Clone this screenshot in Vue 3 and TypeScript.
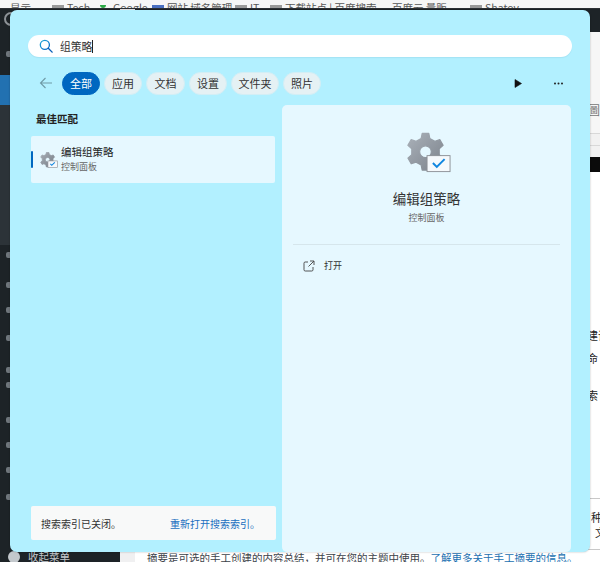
<script setup lang="ts">
import { computed } from 'vue'

const chips = [
  { label: '全部', w: 38, active: true },
  { label: '应用', w: 38 },
  { label: '文档', w: 39 },
  { label: '设置', w: 38 },
  { label: '文件夹', w: 48 },
  { label: '照片', w: 38 },
]

const marks = [
  { t: '显示', w: 42 },
  { t: 'Tech', w: 48, box: true },
  { t: 'Google', w: 52, dot: true },
  { t: '网站 域名管理', w: 83, box: true, blue: true },
  { t: 'IT', w: 35, box: true },
  { t: '下载站点 | 百度搜索...', w: 122, box: true },
  { t: '百度云 量贩', w: 78 },
  { t: 'Shatov', w: 60, box: true },
]

const sideDots = [0, 24, 19, 22, 26, 9, 29, 19, 19, 21]

const gear = computed(() => {
  const cx = 50, cy = 50, outer = 48, inner = 36, teeth = 6
  const pts: string[] = []
  for (let i = 0; i < teeth; i++) {
    const a = (i * 2 * Math.PI) / teeth - Math.PI / 2
    const step = (2 * Math.PI) / teeth
    const p: [number, number][] = [
      [inner, a - step * 0.3],
      [outer, a - step * 0.17],
      [outer, a + step * 0.17],
      [inner, a + step * 0.3],
    ]
    for (const [r, t] of p) {
      pts.push(`${(cx + r * Math.cos(t)).toFixed(1)} ${(cy + r * Math.sin(t)).toFixed(1)}`)
    }
  }
  const hole = `M${cx + 15} ${cy}a15 15 0 1 0 -30 0a15 15 0 1 0 30 0z`
  return `M${pts.join('L')}Z${hole}`
})
</script>

<template>
  <div class="page">
    <div class="bookmarks">
      <span v-for="m in marks" :key="m.t" class="mark" :style="{ width: m.w + 'px' }">
        <i v-if="m.box" class="mark-box" :class="{ blue: m.blue }"></i>
        <i v-if="m.dot" class="mark-dot"></i>
        <b class="mark-t">{{ m.t }}</b>
      </span>
    </div>
    <div class="desk">
      <aside class="side">
        <div class="side-top"><i class="wp"></i><i class="side-dot home"></i></div>
        <div class="side-active"></div>
        <div class="side-sub"></div>
        <div class="side-rest">
          <i v-for="(d, i) in sideDots" :key="i" class="side-dot" :style="{ marginTop: d + 'px' }"></i>
        </div>
        <div class="side-foot"><i class="collapse"></i>收起菜单</div>
      </aside>
      <main class="content">
        <div class="adminbar"></div>
        <div class="greys">
          <span class="gl-icon">圖</span>
        </div>
        <div class="gline"></div>
        <div class="gline"></div>
        <div class="blackbar"></div>
        <div class="frag f1">建议</div>
        <div class="frag f2">命</div>
        <div class="frag f3">索</div>
        <div class="frag f4">种</div>
        <div class="frag f5">文</div>
        <div class="bline l1"></div>
        <div class="bline l2"></div>
        <p class="excerpt">摘要是可选的手工创建的内容总结，并可在您的主题中使用。<a>了解更多关于手工摘要的信息。</a></p>
      </main>
    </div>

    <section class="panel">
      <div class="search">
        <svg class="search-ico" viewBox="0 0 16 16" width="14" height="14">
          <defs>
            <linearGradient id="sg" x1="0" y1="0" x2="1" y2="1">
              <stop offset="0" stop-color="#1fa8d8" />
              <stop offset="1" stop-color="#0a62c4" />
            </linearGradient>
          </defs>
          <circle cx="6.7" cy="6.7" r="5.2" fill="none" stroke="url(#sg)" stroke-width="1.5" />
          <path d="M10.6 10.6 15 15" stroke="#0a5fb8" stroke-width="1.6" stroke-linecap="round" />
        </svg>
        <span class="query">组策略</span><span class="caret"></span>
      </div>

      <nav class="tabs">
        <svg class="back" viewBox="0 0 14 12" width="14" height="12">
          <path d="M13 6H1.5M6.5 1 1.5 6l5 5" fill="none" stroke="#6f9aa6" stroke-width="1.1" />
        </svg>
        <span
          v-for="c in chips"
          :key="c.label"
          class="chip"
          :class="{ active: c.active }"
          :style="{ width: c.w + 'px' }"
        >{{ c.label }}</span>
        <span class="spacer"></span>
        <svg class="play" viewBox="0 0 8 9" width="8" height="9"><path d="M1 0.5 7.5 4.5 1 8.5Z" fill="#111" stroke="#111" stroke-width=".6" stroke-linejoin="round" /></svg>
        <svg class="more" viewBox="0 0 9 3" width="9" height="3">
          <circle cx="1" cy="1.5" r="1" fill="#222" /><circle cx="4.500" cy="1.5" r="1" fill="#222" /><circle cx="8" cy="1.5" r="1" fill="#222" />
        </svg>
      </nav>

      <div class="body">
        <div class="left">
          <h3 class="best">最佳匹配</h3>
          <div class="result">
            <i class="accent"></i>
            <svg class="res-ico" viewBox="0 0 118 104" width="18" height="16">
              <defs>
                <linearGradient id="g1" x1="0" y1="0" x2="1" y2="1">
                  <stop offset="0" stop-color="#a6adb5" />
                  <stop offset="1" stop-color="#777e87" />
                </linearGradient>
              </defs>
              <path :d="gear" fill="url(#g1)" fill-rule="evenodd" stroke="url(#g1)" stroke-width="5" stroke-linejoin="round" />
              <rect x="52" y="58" width="62" height="42" fill="#f5f8fb" stroke="#8a8e94" stroke-width="4" />
              <path d="M68 78l9 9 20-20" fill="none" stroke="#0f86e0" stroke-width="7" />
            </svg>
            <div class="res-text">
              <div class="res-title">编辑组策略</div>
              <div class="res-sub">控制面板</div>
            </div>
          </div>
          <div class="notice">
            <span>搜索索引已关闭。</span>
            <a>重新打开搜索索引。</a>
          </div>
        </div>

        <div class="detail">
          <svg class="big-ico" viewBox="0 0 118 104" width="46" height="41">
            <defs>
              <linearGradient id="g2" x1="0" y1="0" x2="1" y2="1">
                <stop offset="0" stop-color="#aab1b9" />
                <stop offset="1" stop-color="#7b828b" />
              </linearGradient>
            </defs>
            <path :d="gear" fill="url(#g2)" fill-rule="evenodd" stroke="url(#g2)" stroke-width="3" stroke-linejoin="round" />
            <rect x="54" y="60" width="59" height="41" fill="#f5f9fc" stroke="#8c9096" stroke-width="2.4" />
            <path d="M69 79l10 10 20-20" fill="none" stroke="#0f86e0" stroke-width="5" />
          </svg>
          <div class="d-title">编辑组策略</div>
          <div class="d-sub">控制面板</div>
          <div class="rule"></div>
          <div class="open">
            <svg viewBox="0 0 12 12" width="12" height="12">
              <path d="M5 2H2.2A1.2 1.2 0 0 0 1 3.2v6.6A1.2 1.2 0 0 0 2.2 11h6.6A1.2 1.2 0 0 0 10 9.800V7M7 1h4v4M11 1 5.500 6.500" fill="none" stroke="#444" stroke-width=".9" />
            </svg>
            <span>打开</span>
          </div>
        </div>
      </div>
    </section>
  </div>
</template>

<style>
html, body { margin: 0; padding: 0; background: #fff; }
</style>

<style scoped>
.page {
  position: relative;
  width: 600px;
  height: 562px;
  overflow: hidden;
  display: flex;
  flex-direction: column;
  background: #fff;
  font-family: "Noto Sans CJK SC", "Noto Sans", sans-serif;
}
.bookmarks {
  height: 8px;
  flex: none;
  display: flex;
  align-items: flex-end;
  padding-left: 10px;
  overflow: hidden;
  background: #f6f6f6;
  border-bottom: 1px solid #2c3034;
  box-sizing: content-box;
  font-size: 10.500px;
  line-height: 12px;
  color: #555;
}
.mark {
  flex: none;
  display: flex;
  align-items: flex-end;
  gap: 3px;
  white-space: nowrap;
  overflow: hidden;
  height: 8px;
}
.mark-t { font-weight: 400; flex: none; transform: translateY(6px); }
.mark-box { width: 12px; height: 3px; background: #9a9a9a; flex: none; }
.mark-box.blue { background: #4a6fc0; }
.mark-dot { width: 6px; height: 3px; border-radius: 0 0 3px 3px; background: #2aa845; flex: none; margin-right: 4px; }
.desk { flex: 1; display: flex; min-height: 0; }
.side { width: 120px; flex: none; background: #1d2327; display: flex; flex-direction: column; }
.side-top { height: 66px; flex: none; display: flex; flex-direction: column; }
.wp { width: 14px; height: 14px; margin: 3px 0 0 4px; box-sizing: border-box; border: 2px solid #8d9297; border-radius: 50%; }
.side-dot { display: block; width: 6px; height: 6px; margin-left: 6px; border-radius: 2px; background: #6f767c; flex: none; }
.home { margin-top: 25px; }
.side-active { height: 30px; flex: none; background: #2271b1; }
.side-sub { height: 140px; flex: none; background: #2c3338; }
.side-rest { flex: 1; padding-top: 7px; display: flex; flex-direction: column; }
.side-foot {
  height: 18px;
  flex: none;
  display: flex;
  align-items: center;
  gap: 8px;
  padding: 7px 0 0 8px;
  box-sizing: border-box;
  font-size: 10.500px;
  color: #c3c8cc;
}
.collapse { width: 12px; height: 12px; border-radius: 50%; background: #c3c8cc; }
.content {
  flex: 1;
  position: relative;
  background: #fff;
  border-left: 15px solid #f0f0f1;
  box-sizing: border-box;
}
.adminbar { height: 23px; background: #1d2327; }
.greys {
  height: 101px;
  background: #f6f6f6;
  display: flex;
  justify-content: flex-end;
  align-items: flex-end;
}
.gl-icon { font-size: 12px; line-height: 20px; color: #777; margin-bottom: 13px; }
.gline { height: 12px; background: #f1f1f1; border-top: 1px solid #d8d8d8; box-sizing: border-box; }
.blackbar { height: 15px; background: #0b0b0b; }
.frag { position: absolute; left: 452px; font-size: 11px; line-height: 14px; color: #222; white-space: nowrap; }
.f1 { top: 319px; }
.f2 { top: 342px; }
.f3 { top: 379px; }
.f4 { top: 501px; left: 456px; }
.f5 { top: 516px; left: 460px; }
.bline { position: absolute; left: 440px; right: 0; height: 1px; background: #c8c8c8; }
.l1 { top: 489px; }
.l2 { top: 540px; }
.excerpt {
  position: absolute;
  left: 12px;
  bottom: -3px;
  margin: 0;
  white-space: nowrap;
  font-size: 10.500px;
  line-height: 15px;
  color: #3c434a;
}
.excerpt a { color: #2271b1; }

.panel {
  position: absolute;
  left: 10px;
  top: 10px;
  width: 580px;
  height: 542px;
  box-sizing: border-box;
  padding: 25px 19px 0 18px;
  display: flex;
  flex-direction: column;
  background: #b2f0ff;
  border-radius: 7px;
  box-shadow: 0 0 2px rgba(0, 0, 0, .3);
}
.search {
  height: 22px;
  flex: none;
  display: flex;
  align-items: center;
  padding-left: 11px;
  margin-right: -1px;
  background: #fff;
  border-radius: 11px;
  box-shadow: 0 1px 1px rgba(0, 80, 110, .08);
}
.search-ico { flex: none; margin-right: 7px; }
.query { font-size: 10.800px; line-height: 16px; color: #333; }
.caret { width: 1px; height: 13px; background: #222; }

.tabs {
  height: 24px;
  flex: none;
  margin-top: 14px;
  display: flex;
  align-items: center;
  gap: 4px;
}
.back { flex: none; margin: 0 5px 0 11px; }
.chip {
  height: 23px;
  flex: none;
  box-sizing: border-box;
  display: flex;
  align-items: center;
  justify-content: center;
  border-radius: 12px;
  font-size: 11px;
  color: #333;
  background: #e5f1f4;
  border: 1px solid #d3eef5;
}
.chip.active { background: #0067c0; border-color: #0067c0; color: #fff; }
.spacer { flex: 1; }
.play { flex: none; margin-right: 28px; }
.more { flex: none; margin-right: 8px; }

.body { flex: 1; display: flex; margin-top: 10px; min-height: 0; }
.left {
  width: 248px;
  flex: none;
  display: flex;
  flex-direction: column;
  padding: 0 0 12px 3px;
  box-sizing: border-box;
}
.best {
  margin: 6px 0 0 5px;
  height: 18px;
  font-size: 10.500px;
  line-height: 15px;
  font-weight: 700;
  color: #222;
}
.result {
  position: relative;
  margin-top: 7px;
  width: 244px;
  height: 47px;
  display: flex;
  align-items: center;
  background: #e6f8ff;
  border-radius: 2px;
  padding: 0 0 1px 9px;
  box-sizing: border-box;
}
.accent { position: absolute; left: 0; top: 15px; width: 2px; height: 17px; background: #0067c0; border-radius: 1px; }
.res-ico { flex: none; margin-right: 3px; margin-top: 1px; }
.res-title { font-size: 10.500px; line-height: 15px; color: #222; }
.res-sub { font-size: 9px; line-height: 14px; color: #666; margin-top: 1px; }
.notice {
  margin-top: auto;
  width: 245px;
  height: 34px;
  flex: none;
  box-sizing: border-box;
  padding: 0 16px 0 10px;
  display: flex;
  align-items: center;
  justify-content: space-between;
  background: #f8f9f9;
  border-radius: 2px;
  font-size: 10px;
  color: #333;
}
.notice a { color: #1a6fc0; }

.detail {
  flex: 1;
  margin-left: 6px;
  background: #e6f8ff;
  border-radius: 5px;
  display: flex;
  flex-direction: column;
  align-items: center;
  padding: 27px 11px 0;
}
.big-ico { flex: none; margin-left: 4px; }
.d-title { margin-top: 15px; font-size: 13.500px; line-height: 20px; color: #333; }
.d-sub { font-size: 9px; line-height: 14px; margin-top: 3px; color: #666; }
.rule { align-self: stretch; height: 1px; margin-top: 19px; background: #d6e6ec; }
.open {
  align-self: stretch;
  display: flex;
  align-items: center;
  gap: 9px;
  margin-top: 14px;
  padding-left: 10px;
  font-size: 9px;
  line-height: 14px;
  color: #333;
}
</style>
